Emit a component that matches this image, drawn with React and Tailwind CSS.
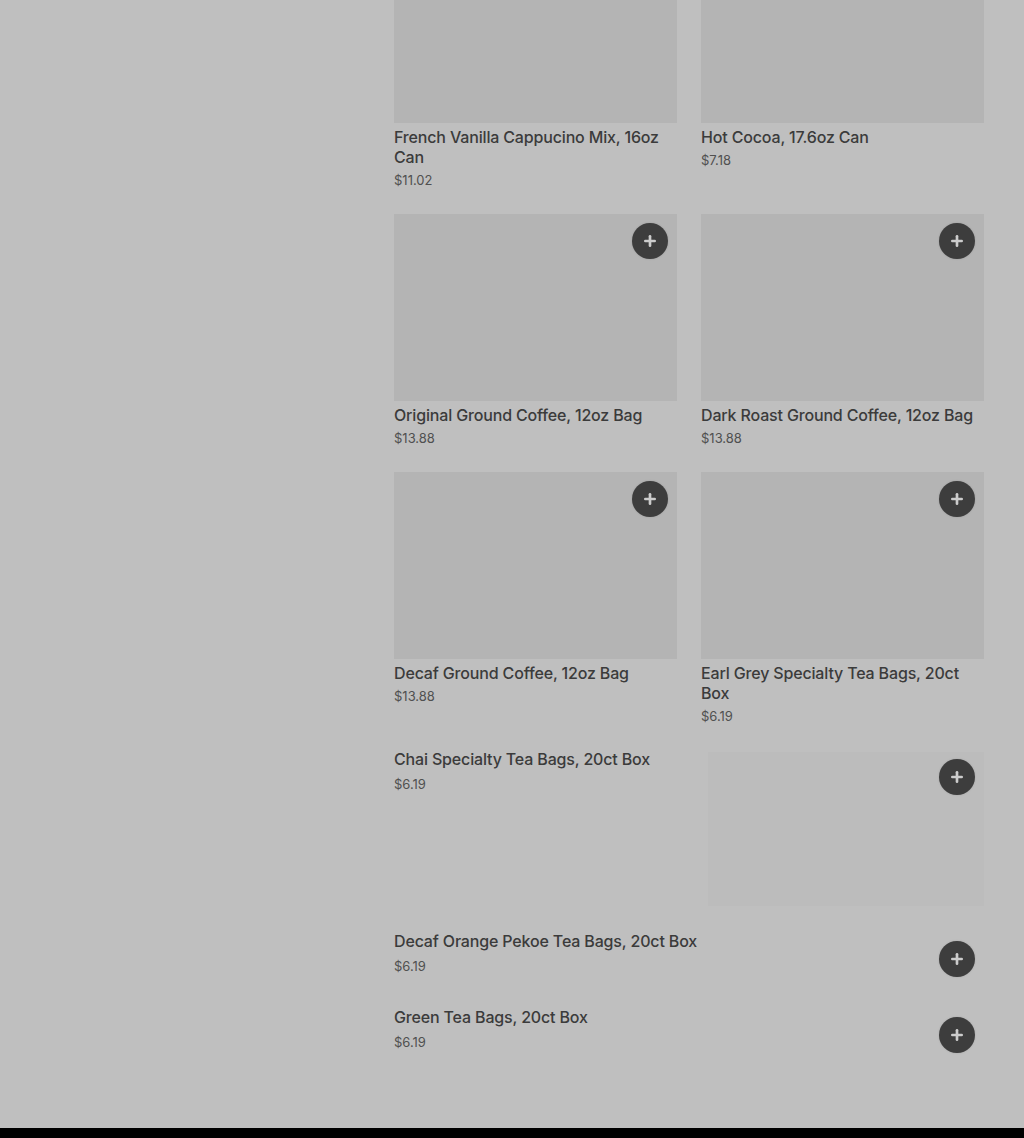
import { Plus } from 'lucide-react'

const GRID = [
  { name: 'French Vanilla Cappucino Mix, 16oz Can', price: '$11.02', top: true },
  { name: 'Hot Cocoa, 17.6oz Can', price: '$7.18', top: true },
  { name: 'Original Ground Coffee, 12oz Bag', price: '$13.88' },
  { name: 'Dark Roast Ground Coffee, 12oz Bag', price: '$13.88' },
  { name: 'Decaf Ground Coffee, 12oz Bag', price: '$13.88' },
  { name: 'Earl Grey Specialty Tea Bags, 20ct Box', price: '$6.19' },
]

function AddButton() {
  return (
    <button className="w-9 h-9 rounded-full bg-[#3d3d3d] flex items-center justify-center shadow-[0_0_2px_rgba(0,0,0,0.15)]">
      <Plus size={16} strokeWidth={4} className="text-[#cccccc]" />
    </button>
  )
}

export default function App() {
  return (
    <div className="min-h-screen bg-[#bfbfbf] flex flex-col" style={{ fontFamily: 'Inter, "Noto Sans", sans-serif' }}>
      <div className="flex-1 flex overflow-hidden">
        {/* left rail */}
        <div className="w-[394px] shrink-0" />

        {/* menu column */}
        <div className="w-[590px] shrink-0 -mt-[64px] pb-[75px]">
          <div className="grid grid-cols-2 gap-x-6 gap-y-6">
            {GRID.map(item => (
              <div key={item.name}>
                <div className="relative h-[187px] bg-[#b4b4b4]">
                  {!item.top && (
                    <div className="absolute top-[9px] right-[9px]">
                      <AddButton />
                    </div>
                  )}
                </div>
                <p className="mt-1 text-base leading-5 font-medium text-[#3b3b3b] tracking-[-0.01em]">{item.name}</p>
                <p className="mt-[3px] text-[13px] leading-5 text-[#505050]">{item.price}</p>
              </div>
            ))}
          </div>

          {/* list rows */}
          <div className="mt-6 flex justify-between">
            <div>
              <p className="text-base leading-5 font-medium text-[#3b3b3b] tracking-[-0.01em] -mt-px">Chai Specialty Tea Bags, 20ct Box</p>
              <p className="mt-[5px] text-[13px] leading-5 text-[#505050]">$6.19</p>
            </div>
            <div className="relative w-[276px] h-[154px] mt-[2px] bg-[#bcbcbc]">
              <div className="absolute top-[7px] right-[9px]">
                <AddButton />
              </div>
            </div>
          </div>

          <div className="mt-[25px] flex justify-between">
            <div>
              <p className="text-base leading-5 font-medium text-[#3b3b3b] tracking-[-0.01em]">Decaf Orange Pekoe Tea Bags, 20ct Box</p>
              <p className="mt-[5px] text-[13px] leading-5 text-[#505050]">$6.19</p>
            </div>
            <div className="mt-[10px] mr-[9px]">
              <AddButton />
            </div>
          </div>

          <div className="mt-[30px] flex justify-between">
            <div>
              <p className="text-base leading-5 font-medium text-[#3b3b3b] tracking-[-0.01em]">Green Tea Bags, 20ct Box</p>
              <p className="mt-[5px] text-[13px] leading-5 text-[#505050]">$6.19</p>
            </div>
            <div className="mt-[10px] mr-[9px]">
              <AddButton />
            </div>
          </div>
        </div>
      </div>

      {/* footer */}
      <div className="h-[10px] bg-black" />
    </div>
  )
}
